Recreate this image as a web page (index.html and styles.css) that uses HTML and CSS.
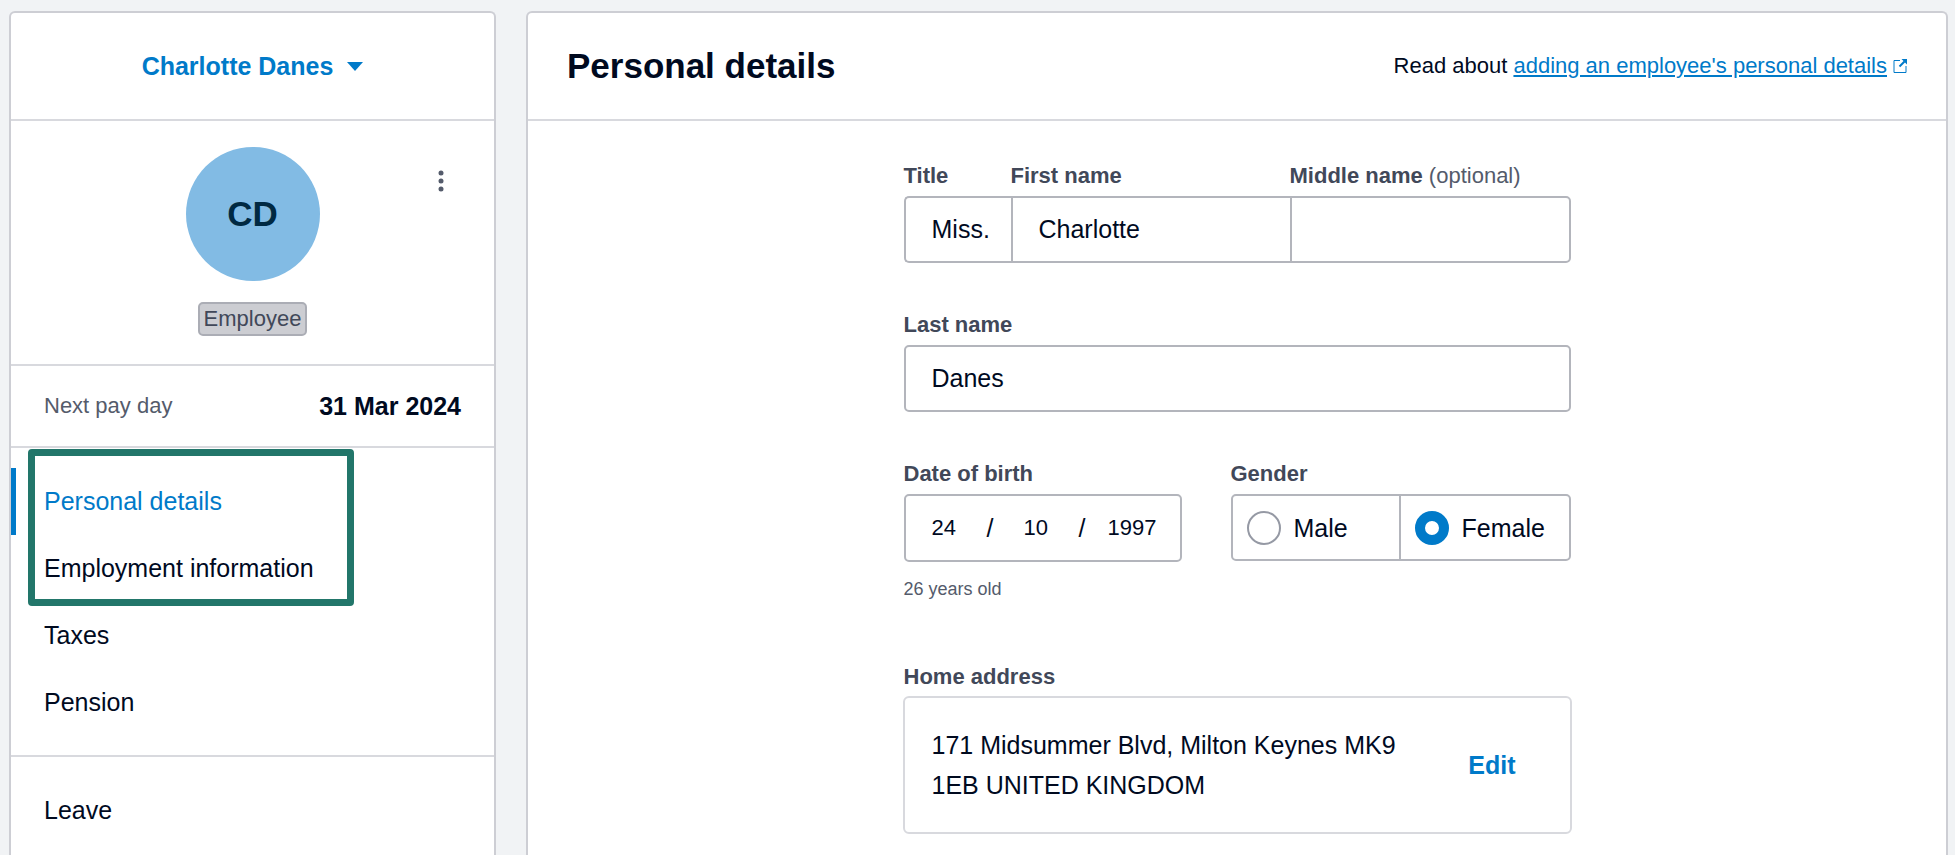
FILE: index.html
```html
<!DOCTYPE html>
<html lang="en">
<head>
  <meta charset="utf-8">
  <title>Personal details</title>
  <link rel="stylesheet" href="styles.css">
</head>
<body>
  <div class="layout">
    <aside class="panel sidebar">
      <div class="panel-header switcher">
        <button type="button" class="switcher-button">
          Charlotte Danes
          <svg class="caret" viewBox="0 0 16 9" aria-hidden="true"><path d="M0 0h16L8 9z"/></svg>
        </button>
      </div>
      <section class="profile">
        <div class="avatar">CD</div>
        <span class="badge">Employee</span>
        <button type="button" class="more" aria-label="More options">
          <svg viewBox="0 0 6 24" aria-hidden="true"><circle cx="3" cy="4" r="2.5"/><circle cx="3" cy="12" r="2.5"/><circle cx="3" cy="20" r="2.5"/></svg>
        </button>
      </section>
      <section class="payday">
        <span class="payday-label">Next pay day</span>
        <strong class="payday-date">31 Mar 2024</strong>
      </section>
      <nav class="nav nav-main">
        <a class="nav-link active" href="#personal">Personal details</a>
        <a class="nav-link" href="#employment">Employment information</a>
        <a class="nav-link" href="#taxes">Taxes</a>
        <a class="nav-link" href="#pension">Pension</a>
        <div class="highlight"></div>
      </nav>
      <nav class="nav">
        <a class="nav-link" href="#leave">Leave</a>
      </nav>
    </aside>

    <main class="panel content">
      <header class="panel-header content-header">
        <h1 class="title">Personal details</h1>
        <p class="help">
          <span>Read about <a class="help-link" href="#help">adding an employee's personal details</a></span>
          <svg class="external" viewBox="0 0 14 14" aria-hidden="true"><path d="M7 1.500H1v12h12V7"/><path class="shaft" d="M6.500 7.500l5-5"/><path class="head" d="M8.500 0H14v5.500z"/></svg>
        </p>
      </header>
      <form class="form">
        <div class="name-grid">
          <label class="label" for="name-title">Title</label>
          <label class="label" for="first-name">First name</label>
          <label class="label" for="middle-name">Middle name <span class="optional">(optional)</span></label>
          <input class="input join-left" id="name-title" type="text" value="Miss.">
          <input class="input join-middle" id="first-name" type="text" value="Charlotte">
          <input class="input join-right" id="middle-name" type="text">
        </div>
        <div class="field">
          <label class="label" for="last-name">Last name</label>
          <input class="input" id="last-name" type="text" value="Danes">
        </div>
        <div class="row">
          <fieldset class="field birth">
            <legend class="label">Date of birth</legend>
            <div class="date-box">
              <input class="date-part" type="text" aria-label="Day" value="24">
              <span class="slash">/</span>
              <input class="date-part" type="text" aria-label="Month" value="10">
              <span class="slash">/</span>
              <input class="date-part" type="text" aria-label="Year" value="1997">
            </div>
            <p class="hint">26 years old</p>
          </fieldset>
          <fieldset class="field gender">
            <legend class="label">Gender</legend>
            <div class="radio-box">
              <label class="option"><input class="radio" type="radio" name="gender" value="male">Male</label>
              <label class="option"><input class="radio" type="radio" name="gender" value="female" checked>Female</label>
            </div>
          </fieldset>
        </div>
        <section class="address">
          <h2 class="label">Home address</h2>
          <div class="address-card">
            <p class="address-text">171 Midsummer Blvd, Milton Keynes MK9 1EB UNITED KINGDOM</p>
            <button type="button" class="edit">Edit</button>
          </div>
        </section>
      </form>
    </main>
  </div>
</body>
</html>
```
FILE: styles.css
```css
* {
  box-sizing: border-box;
}

body {
  margin: 0;
  background: #f1f3f5;
  color: #000a1f;
  font-family: "Liberation Sans", Arial, sans-serif;
  font-size: 25px;
  line-height: 40px;
}

h1, h2, p, fieldset, legend {
  margin: 0;
  padding: 0;
  border: 0;
}

button, input {
  margin: 0;
  font: inherit;
  color: inherit;
}

button {
  padding: 0;
  border: 0;
  background: none;
  cursor: pointer;
}

.layout {
  display: grid;
  grid-template-columns: 487px 1fr;
  gap: 30px;
  min-height: 100vh;
  padding: 11px 7px 0 9px;
}

.panel {
  background: #fff;
  border: 2px solid #cdced4;
  border-bottom: 0;
  border-radius: 6px 6px 0 0;
}

.panel-header {
  display: flex;
  align-items: center;
  height: 108px;
  border-bottom: 2px solid #d8d9de;
}

.switcher {
  justify-content: center;
}

.switcher-button {
  display: flex;
  align-items: center;
  gap: 14px;
  color: #007ac9;
  font-weight: 700;
}

.caret {
  width: 16px;
  height: 9px;
  fill: #007ac9;
}

.profile {
  position: relative;
  display: flex;
  flex-direction: column;
  align-items: center;
  gap: 21px;
  padding: 26px 0 28px;
  border-bottom: 2px solid #d8d9de;
}

.avatar {
  display: flex;
  align-items: center;
  justify-content: center;
  width: 134px;
  height: 134px;
  border-radius: 50%;
  background: #82bbe4;
  color: #002942;
  font-size: 35px;
  font-weight: 700;
}

.badge {
  padding: 0 4px;
  border: 2px solid #abadb5;
  border-radius: 5px;
  background: #cccdd2;
  color: #414859;
  font-size: 22px;
  line-height: 30px;
}

.more {
  position: absolute;
  top: 48px;
  right: 50px;
  display: flex;
}

.more svg {
  width: 6px;
  height: 24px;
  fill: #545b6b;
}

.payday {
  display: flex;
  align-items: center;
  justify-content: space-between;
  padding: 20px 33px;
  border-bottom: 2px solid #d8d9de;
}

.payday-label {
  color: #545b6b;
  font-size: 22px;
}

.nav {
  position: relative;
  padding: 20px 0;
}

.nav-main {
  padding-bottom: 19px;
  border-bottom: 2px solid #d8d9de;
}

.nav-link {
  display: block;
  padding: 0 33px;
  color: inherit;
  line-height: 67px;
  text-decoration: none;
}

.nav-link.active {
  color: #007ac9;
  box-shadow: inset 5px 0 #007ac9;
}

.highlight {
  position: absolute;
  top: 1px;
  left: 17px;
  width: 326px;
  height: 157px;
  border: 7px solid #22766a;
  border-radius: 4px;
  pointer-events: none;
}

.content-header {
  justify-content: space-between;
  padding: 0 39px;
}

.title {
  font-size: 35px;
}

.help {
  display: flex;
  align-items: center;
  gap: 6px;
  font-size: 22px;
}

.help-link {
  color: #007ac9;
}

.external {
  width: 14px;
  height: 14px;
  fill: none;
  stroke: #007ac9;
  stroke-width: 1;
}

.external .shaft {
  stroke-width: 2;
}

.external .head {
  fill: #007ac9;
  stroke: none;
}

.form {
  display: flex;
  flex-direction: column;
  gap: 48px;
  max-width: 667px;
  margin: 0 auto;
  padding: 41px 0;
}

.label {
  display: block;
  color: #414859;
  font-size: 22px;
  font-weight: 700;
  line-height: 28px;
}

.optional {
  color: #545b6b;
  font-weight: 400;
}

.name-grid {
  display: grid;
  grid-template-columns: 107px 279px 1fr;
  row-gap: 6px;
}

.field {
  display: flex;
  flex-direction: column;
  gap: 6px;
  min-width: 0;
}

.input, .date-box, .radio-box {
  width: 100%;
  height: 67px;
  border: 2px solid #b3b5bc;
  border-radius: 5px;
  background: #fff;
}

.input {
  padding: 0 8px 0 26px;
}

.join-left {
  border-right: 0;
  border-radius: 5px 0 0 5px;
}

.join-middle {
  border-right: 0;
  border-radius: 0;
}

.join-right {
  border-radius: 0 5px 5px 0;
}

.row {
  display: flex;
  justify-content: space-between;
}

.birth {
  width: 278px;
}

.gender {
  width: 340px;
}

.row .label {
  margin-bottom: 6px;
}

.date-box {
  display: grid;
  grid-template-columns: 55px 37px 55px 29px 1fr;
  align-items: center;
  height: 68px;
  padding: 0 12px 0 26px;
}

.date-part {
  width: 100%;
  min-width: 0;
  padding: 0;
  border: 0;
  background: none;
  font-size: 22px;
}

.hint {
  margin-top: 9px;
  color: #545b6b;
  font-size: 18px;
  line-height: 24px;
}

.radio-box {
  display: grid;
  grid-template-columns: 1fr 1fr;
}

.option {
  display: flex;
  align-items: center;
  gap: 13px;
  padding-left: 14px;
}

.option + .option {
  margin-left: -2px;
  border-left: 2px solid #b3b5bc;
}

.radio {
  appearance: none;
  width: 34px;
  height: 34px;
  border: 2px solid #9599a4;
  border-radius: 50%;
  background: #fff;
}

.radio:checked {
  border: 10px solid #007ac9;
}

.address {
  display: flex;
  flex-direction: column;
  gap: 5px;
  padding-top: 14px;
}

.address-card {
  display: flex;
  align-items: center;
  justify-content: space-between;
  gap: 40px;
  margin: 0 -1px;
  padding: 27px 54px 27px 27px;
  border: 2px solid #d8d9de;
  border-radius: 6px;
}

.address-text {
  max-width: 500px;
}

.edit {
  color: #007ac9;
  font-weight: 700;
}
```
